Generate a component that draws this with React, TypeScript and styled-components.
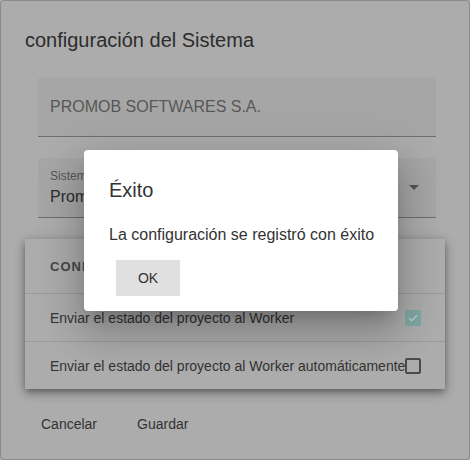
import styled, { createGlobalStyle } from "styled-components";

const GlobalStyle = createGlobalStyle`
  html, body {
    margin: 0;
    padding: 0;
    background: #acacac;
  }
  body {
    font-family: "Liberation Sans", Arial, sans-serif;
  }
  * {
    box-sizing: border-box;
  }
`;

const Screen = styled.div`
  position: relative;
  width: 470px;
  height: 460px;
  background: #acacac;
  border: 1px solid #8a8a8a;
  border-radius: 4px;
  padding: 23px 24px 0;
  display: flex;
  flex-direction: column;
  overflow: hidden;
`;

const Title = styled.h2`
  margin: 0;
  font-size: 20px;
  line-height: 32px;
  font-weight: 400;
  color: #2c2c2c;
`;

const Field = styled.div`
  width: 398px;
  height: 60px;
  margin: 21px 0 0 13px;
  background: #a6a6a6;
  border-bottom: 1px solid #6e6e6e;
  border-radius: 4px 4px 0 0;
  padding: 0 12px;
  display: flex;
  align-items: center;
  justify-content: space-between;
`;

const FieldText = styled.span`
  font-size: 16px;
  color: #575757;
`;

const SelectBody = styled.div`
  display: flex;
  flex-direction: column;
  gap: 4px;
`;

const Label = styled.span`
  font-size: 12px;
  line-height: 14px;
  color: #555;
`;

const Value = styled.span`
  font-size: 16px;
  line-height: 19px;
  color: #2c2c2c;
`;

const Arrow = styled.span`
  width: 0;
  height: 0;
  margin-right: 5px;
  border-left: 5px solid transparent;
  border-right: 5px solid transparent;
  border-top: 5px solid #555;
`;

const Card = styled.div`
  margin-top: 21px;
  background: #acacac;
  box-shadow: 0 3px 6px -1px rgba(0, 0, 0, 0.3), 0 5px 10px rgba(0, 0, 0, 0.18),
    0 1px 12px rgba(0, 0, 0, 0.14);
`;

const CardHeader = styled.div`
  height: 55px;
  padding: 0 25px;
  display: flex;
  align-items: center;
  font-size: 13px;
  font-weight: 700;
  letter-spacing: 1px;
  color: #474747;
  text-transform: uppercase;
  border-bottom: 1px solid #999;
  white-space: nowrap;
`;

const Row = styled.div<{ last?: boolean }>`
  height: ${(p) => (p.last ? "47px" : "48px")};
  padding: 0 24px 0 25px;
  display: flex;
  align-items: center;
  justify-content: space-between;
  font-size: 14px;
  color: #333;
  white-space: nowrap;
  border-bottom: ${(p) => (p.last ? "none" : "1px solid #999")};
`;

const Box = styled.span<{ checked?: boolean }>`
  flex: none;
  width: 16px;
  height: 16px;
  border-radius: 2px;
  display: flex;
  align-items: center;
  justify-content: center;
  background: ${(p) => (p.checked ? "#80a8a4" : "transparent")};
  border: ${(p) => (p.checked ? "none" : "2px solid #4a4a4a")};
`;

const Actions = styled.div`
  margin-top: 17px;
  display: flex;
  gap: 8px;
`;

const TextButton = styled.button`
  height: 36px;
  padding: 0 16px;
  border: none;
  background: transparent;
  font-family: inherit;
  font-size: 14px;
  color: #333;
  cursor: pointer;
`;

const Modal = styled.div`
  position: absolute;
  left: 83px;
  top: 149px;
  width: 314px;
  height: 161px;
  background: #fff;
  border-radius: 4px;
  padding: 24px 20px 15px 25px;
  display: flex;
  flex-direction: column;
  align-items: flex-start;
  white-space: nowrap;
  box-shadow: 0 11px 15px -7px rgba(0, 0, 0, 0.2), 0 24px 38px 3px rgba(0, 0, 0, 0.14),
    0 9px 46px 8px rgba(0, 0, 0, 0.12);
`;

const ModalTitle = styled.h3`
  margin: 0;
  font-size: 20px;
  line-height: 32px;
  font-weight: 400;
  color: #333;
`;

const ModalText = styled.p`
  margin: 17px 0 0;
  font-size: 16px;
  line-height: 24px;
  color: #333;
`;

const OkButton = styled.button`
  margin: 13px 0 0 7px;
  width: 64px;
  height: 36px;
  border: none;
  border-radius: 0;
  background: #e0e0e0;
  font-family: inherit;
  font-size: 14px;
  color: #333;
  cursor: pointer;
`;

function Check() {
  return (
    <svg width="12" height="12" viewBox="0 0 24 24">
      <path d="M4 12.5l5 5L20 6.5" fill="none" stroke="#b9cecb" strokeWidth="2.5" />
    </svg>
  );
}

export default function App() {
  return (
    <>
      <GlobalStyle />
      <Screen>
        <Title>configuración del Sistema</Title>
        <Field>
          <FieldText>PROMOB SOFTWARES S.A.</FieldText>
        </Field>
        <Field>
          <SelectBody>
            <Label>Sistema</Label>
            <Value>Promob</Value>
          </SelectBody>
          <Arrow />
        </Field>
        <Card>
          <CardHeader>Configuración del Worker</CardHeader>
          <Row>
            Enviar el estado del proyecto al Worker
            <Box checked>
              <Check />
            </Box>
          </Row>
          <Row last>
            Enviar el estado del proyecto al Worker automáticamente
            <Box />
          </Row>
        </Card>
        <Actions>
          <TextButton>Cancelar</TextButton>
          <TextButton>Guardar</TextButton>
        </Actions>
        <Modal>
          <ModalTitle>Éxito</ModalTitle>
          <ModalText>La configuración se registró con éxito</ModalText>
          <OkButton>OK</OkButton>
        </Modal>
      </Screen>
    </>
  );
}
